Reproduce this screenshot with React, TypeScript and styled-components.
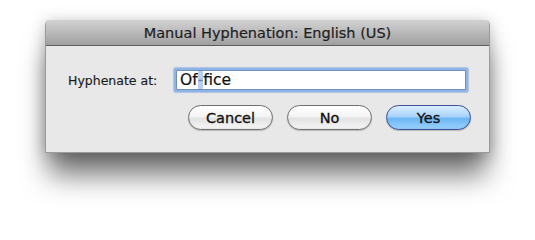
import React from 'react'
import styled, { createGlobalStyle } from 'styled-components'

const GlobalStyle = createGlobalStyle`
  html, body {
    margin: 0;
    padding: 0;
    background: #ffffff;
  }
  body {
    font-family: "DejaVu Sans", "Liberation Sans", sans-serif;
  }
`

const Page = styled.div`
  width: 535px;
  height: 217px;
  padding: 20px 0 0 45px;
  box-sizing: border-box;
  overflow: hidden;
`

const Dialog = styled.div`
  width: 445px;
  height: 133px;
  display: flex;
  flex-direction: column;
  background: #e8e8e8;
  border: 1px solid #9a9a9a;
  border-top: none;
  border-radius: 5px 5px 0 0;
  box-sizing: border-box;
  box-shadow: 0 26px 28px -4px rgba(0, 0, 0, 0.55), 0 2px 16px rgba(0, 0, 0, 0.25);
`

const TitleBar = styled.div`
  height: 26px;
  flex: none;
  display: flex;
  align-items: center;
  justify-content: center;
  border-radius: 5px 5px 0 0;
  background: linear-gradient(#d2d2d2, #bcbcbc 45%, #a0a0a0);
  border-bottom: 1px solid #5e5e5e;
  box-sizing: border-box;
  font-size: 14.5px;
  color: #1e1e1e;
  -webkit-text-stroke: 0.2px #1e1e1e;
`

const Body = styled.div`
  flex: 1;
  display: flex;
  flex-direction: column;
  padding: 22px 18px 0 22px;
  gap: 13px;
`

const FieldRow = styled.div`
  display: flex;
  align-items: center;
  height: 24px;
`

const Label = styled.div`
  font-size: 12.5px;
  color: #1a1a1a;
  -webkit-text-stroke: 0.15px #1a1a1a;
  width: 105px;
  flex: none;
`

const TextField = styled.div`
  flex: 1;
  height: 18px;
  margin: 0 5px 0 3px;
  display: flex;
  align-items: center;
  padding-left: 3px;
  background: #ffffff;
  border: 1px solid #6f8fc0;
  box-shadow: 0 0 0 2px #8fb3e4, 0 0 1px 3px rgba(120, 160, 220, 0.5);
  border-radius: 1px;
  font-size: 15.5px;
  color: #111;
  -webkit-text-stroke: 0.2px #111;
`

const Selected = styled.span`
  background: #b8cff0;
  color: #5f86c4;
  -webkit-text-stroke: 0.2px #5f86c4;
`

const ButtonRow = styled.div`
  display: flex;
  justify-content: flex-end;
  gap: 14px;
`

const Button = styled.div<{ $primary?: boolean }>`
  width: 85px;
  height: 25px;
  box-sizing: border-box;
  border-radius: 13px;
  display: flex;
  align-items: center;
  justify-content: center;
  font-size: 14.5px;
  color: #111;
  -webkit-text-stroke: 0.3px #111;
  border: 1px solid ${p => (p.$primary ? '#3c4f97' : '#707070')};
  background: ${p =>
    p.$primary
      ? 'linear-gradient(#dbeeff, #a9d3fb 45%, #6db6f5 55%, #9ad3ff)'
      : 'linear-gradient(#ffffff, #f4f4f4 45%, #e2e2e2 55%, #f7f7f7)'};
  box-shadow: 0 1px 1px rgba(0, 0, 0, 0.2), inset 0 -1px 2px rgba(0, 0, 0, 0.08);
`

export default function App() {
  return (
    <>
      <GlobalStyle />
      <Page>
        <Dialog>
          <TitleBar>Manual Hyphenation: English (US)</TitleBar>
          <Body>
            <FieldRow>
              <Label>Hyphenate at:</Label>
              <TextField>
                Of<Selected>-</Selected>fice
              </TextField>
            </FieldRow>
            <ButtonRow>
              <Button>Cancel</Button>
              <Button>No</Button>
              <Button $primary>Yes</Button>
            </ButtonRow>
          </Body>
        </Dialog>
      </Page>
    </>
  )
}
